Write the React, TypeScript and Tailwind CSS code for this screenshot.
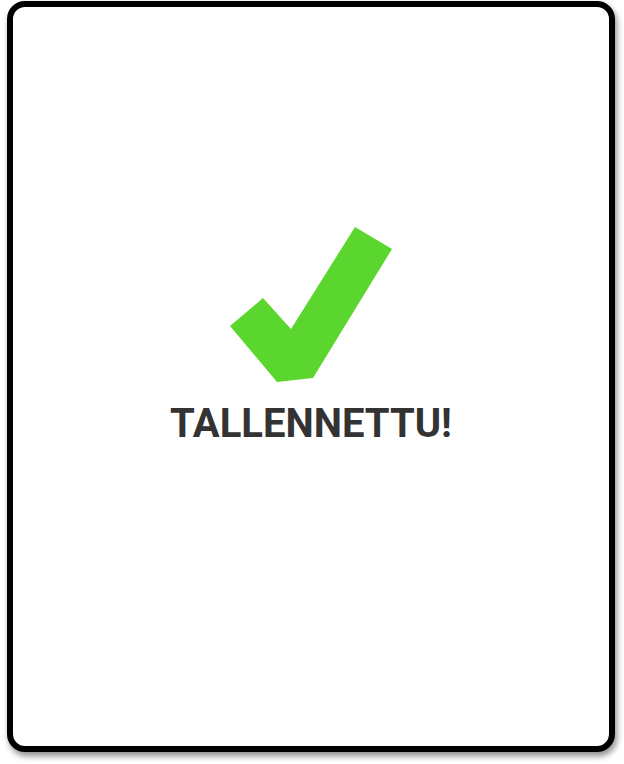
import React from "react";

const Check = () => (
  <svg width="162" height="156" viewBox="0 0 162 156" className="block">
    <polygon
      points="0,99 33,71 61,102 125,0 162,22 83,151 47,155"
      fill="#5ad62f"
    />
  </svg>
);

const App = () => {
  return (
    <div className="w-[624px] h-[764px] bg-white pl-[7px] pt-[1px] pr-[9px] pb-[12px]">
      <div className="h-full w-full rounded-[18px] border-[6px] border-black bg-white shadow-[2px_4px_6px_rgba(0,0,0,0.45)] flex flex-col items-center pt-[220px]">
        <Check />
        <h1
          className="mt-[21px] text-[40px] leading-none font-bold text-[#333333]"
          style={{ fontFamily: "Roboto, 'Liberation Sans', sans-serif" }}
        >
          TALLENNETTU!
        </h1>
      </div>
    </div>
  );
};

export default App;
